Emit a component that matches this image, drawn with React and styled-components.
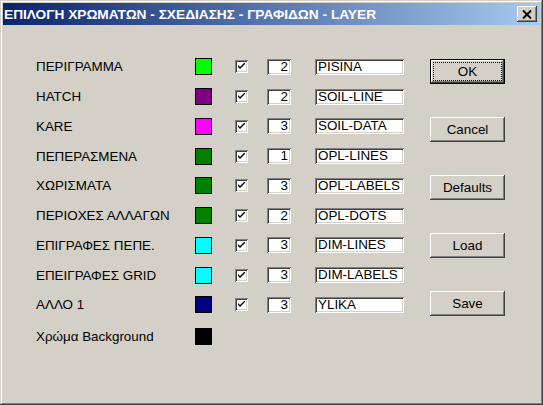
import React, { useState } from 'react'
import styled, { createGlobalStyle } from 'styled-components'

const GlobalStyle = createGlobalStyle`
	html, body {
		margin: 0;
		padding: 0;
		background: #d4d0c8;
	}
	body {
		font-family: 'Liberation Sans', Arial, sans-serif;
		font-size: 13px;
		color: #000;
	}
`

const layers = [
	{ label: 'ΠΕΡΙΓΡΑΜΜΑ', color: '#00ff00', width: 2, name: 'PISINA' },
	{ label: 'HATCH', color: '#800080', width: 2, name: 'SOIL-LINE' },
	{ label: 'KARE', color: '#ff00ff', width: 3, name: 'SOIL-DATA' },
	{ label: 'ΠΕΠΕΡΑΣΜΕΝΑ', color: '#008000', width: 1, name: 'OPL-LINES' },
	{ label: 'ΧΩΡΙΣΜΑΤΑ', color: '#008000', width: 3, name: 'OPL-LABELS' },
	{ label: 'ΠΕΡΙΟΧΕΣ ΑΛΛΑΓΩΝ', color: '#008000', width: 2, name: 'OPL-DOTS' },
	{ label: 'ΕΠΙΓΡΑΦΕΣ ΠΕΠΕ.', color: '#00ffff', width: 3, name: 'DIM-LINES' },
	{ label: 'ΕΠΕΙΓΡΑΦΕΣ GRID', color: '#00ffff', width: 3, name: 'DIM-LABELS' },
	{ label: 'ΑΛΛΟ 1', color: '#000080', width: 3, name: 'YLIKA' },
]

const buttons = ['OK', 'Cancel', 'Defaults', 'Load', 'Save']

const App = () => {
	const [rows, setRows] = useState(layers.map(l => ({ ...l, on: true })))

	const toggle = i => {
		setRows(rows.map((r, j) => (j === i ? { ...r, on: !r.on } : r)))
	}

	return (
		<>
			<GlobalStyle />
			<Window>
				<TitleBar>
					<Caption>ΕΠΙΛΟΓΗ ΧΡΩΜΑΤΩΝ - ΣΧΕΔΙΑΣΗΣ - ΓΡΑΦΙΔΩΝ - LAYER</Caption>
					<CloseButton aria-label="Close">
						<svg width="10" height="9" viewBox="0 0 10 9">
							<path d="M1 0.5 L9 8.5 M9 0.5 L1 8.5" stroke="#000" strokeWidth="2" fill="none" />
						</svg>
					</CloseButton>
				</TitleBar>
				<Body>
					<Rows>
						{rows.map((r, i) => (
							<Row key={r.label}>
								<Label>{r.label}</Label>
								<Swatch $color={r.color} />
								<Check onClick={() => toggle(i)}>
									{r.on && (
										<svg width="7" height="7" viewBox="0 0 7 7">
											<path d="M0 2 V4 L2 6 L7 1 V-1 L2 4 Z" fill="#000" />
										</svg>
									)}
								</Check>
								<NumBox>{r.width}</NumBox>
								<TextBox>{r.name}</TextBox>
							</Row>
						))}
						<Row $last>
							<Label>Χρώμα Background</Label>
							<Swatch $color="#000000" />
						</Row>
					</Rows>
					<Buttons>
						{buttons.map(b => (
							<Button key={b} $default={b === 'OK'}>
								<span>{b}</span>
							</Button>
						))}
					</Buttons>
				</Body>
			</Window>
		</>
	)
}

const Window = styled.div`
	width: 543px;
	height: 405px;
	box-sizing: border-box;
	padding: 3px;
	background: #d4d0c8;
	box-shadow: inset -1px -1px #404040, inset 1px 1px #d4d0c8, inset -2px -2px #808080, inset 2px 2px #ffffff;
	display: flex;
	flex-direction: column;
`

const TitleBar = styled.div`
	height: 22px;
	flex: none;
	display: flex;
	align-items: center;
	justify-content: space-between;
	padding: 0 3px 0 1px;
	background: linear-gradient(to right, #0a246a, #a6caf0);
`

const Caption = styled.div`
	color: #ffffff;
	font-size: 13.7px;
	font-weight: bold;
	white-space: nowrap;
`

const CloseButton = styled.div`
	width: 20px;
	height: 16px;
	box-sizing: border-box;
	background: #d4d0c8;
	display: flex;
	align-items: center;
	justify-content: center;
	box-shadow: inset -1px -1px #404040, inset 1px 1px #ffffff, inset -2px -2px #808080;
`

const Body = styled.div`
	display: flex;
	align-items: flex-start;
`

const Rows = styled.div`
	padding: 27px 0 0 32px;
	display: flex;
	flex-direction: column;
`

const Row = styled.div`
	height: 29.75px;
	margin-top: ${p => (p.$last ? '2px' : '0')};
	display: grid;
	grid-template-columns: 160px 40px 32px 48px 89px;
	align-items: center;
`

const Label = styled.div`
	white-space: nowrap;
	font-size: 13.4px;
	padding-left: 1px;
`

const Swatch = styled.div`
	width: 17px;
	height: 17px;
	box-sizing: border-box;
	border: 1px solid #000;
	background: ${p => p.$color};
`

const sunken = `
	box-sizing: border-box;
	background: #ffffff;
	box-shadow: inset 1px 1px #808080, inset -1px -1px #ffffff, inset 2px 2px #404040, inset -2px -2px #d4d0c8;
`

const Check = styled.div`
	${sunken}
	width: 13px;
	height: 13px;
	display: flex;
	align-items: center;
	justify-content: center;
	cursor: default;
`

const NumBox = styled.div`
	${sunken}
	width: 24px;
	height: 16px;
	padding: 0 3px 0 2px;
	text-align: right;
	line-height: 16px;
	font-size: 13.4px;
`

const TextBox = styled.div`
	${sunken}
	width: 89px;
	height: 16px;
	padding: 0 2px 0 3px;
	line-height: 16px;
	font-size: 13.4px;
	white-space: nowrap;
	overflow: hidden;
`

const Buttons = styled.div`
	margin-left: 26px;
	padding-top: 34px;
	display: flex;
	flex-direction: column;
	gap: 33px;
`

const Button = styled.div`
	width: 75px;
	height: 25px;
	box-sizing: border-box;
	display: flex;
	align-items: center;
	justify-content: center;
	font-size: 13.4px;
	background: #d4d0c8;
	border: ${p => (p.$default ? '1px solid #000' : 'none')};
	box-shadow: inset -1px -1px #404040, inset 1px 1px #ffffff, inset -2px -2px #808080;
	padding: 3px;

	span {
		flex: 1;
		align-self: stretch;
		display: flex;
		align-items: center;
		justify-content: center;
		outline: ${p => (p.$default ? '1px dotted #000' : 'none')};
	}
`

export default App
